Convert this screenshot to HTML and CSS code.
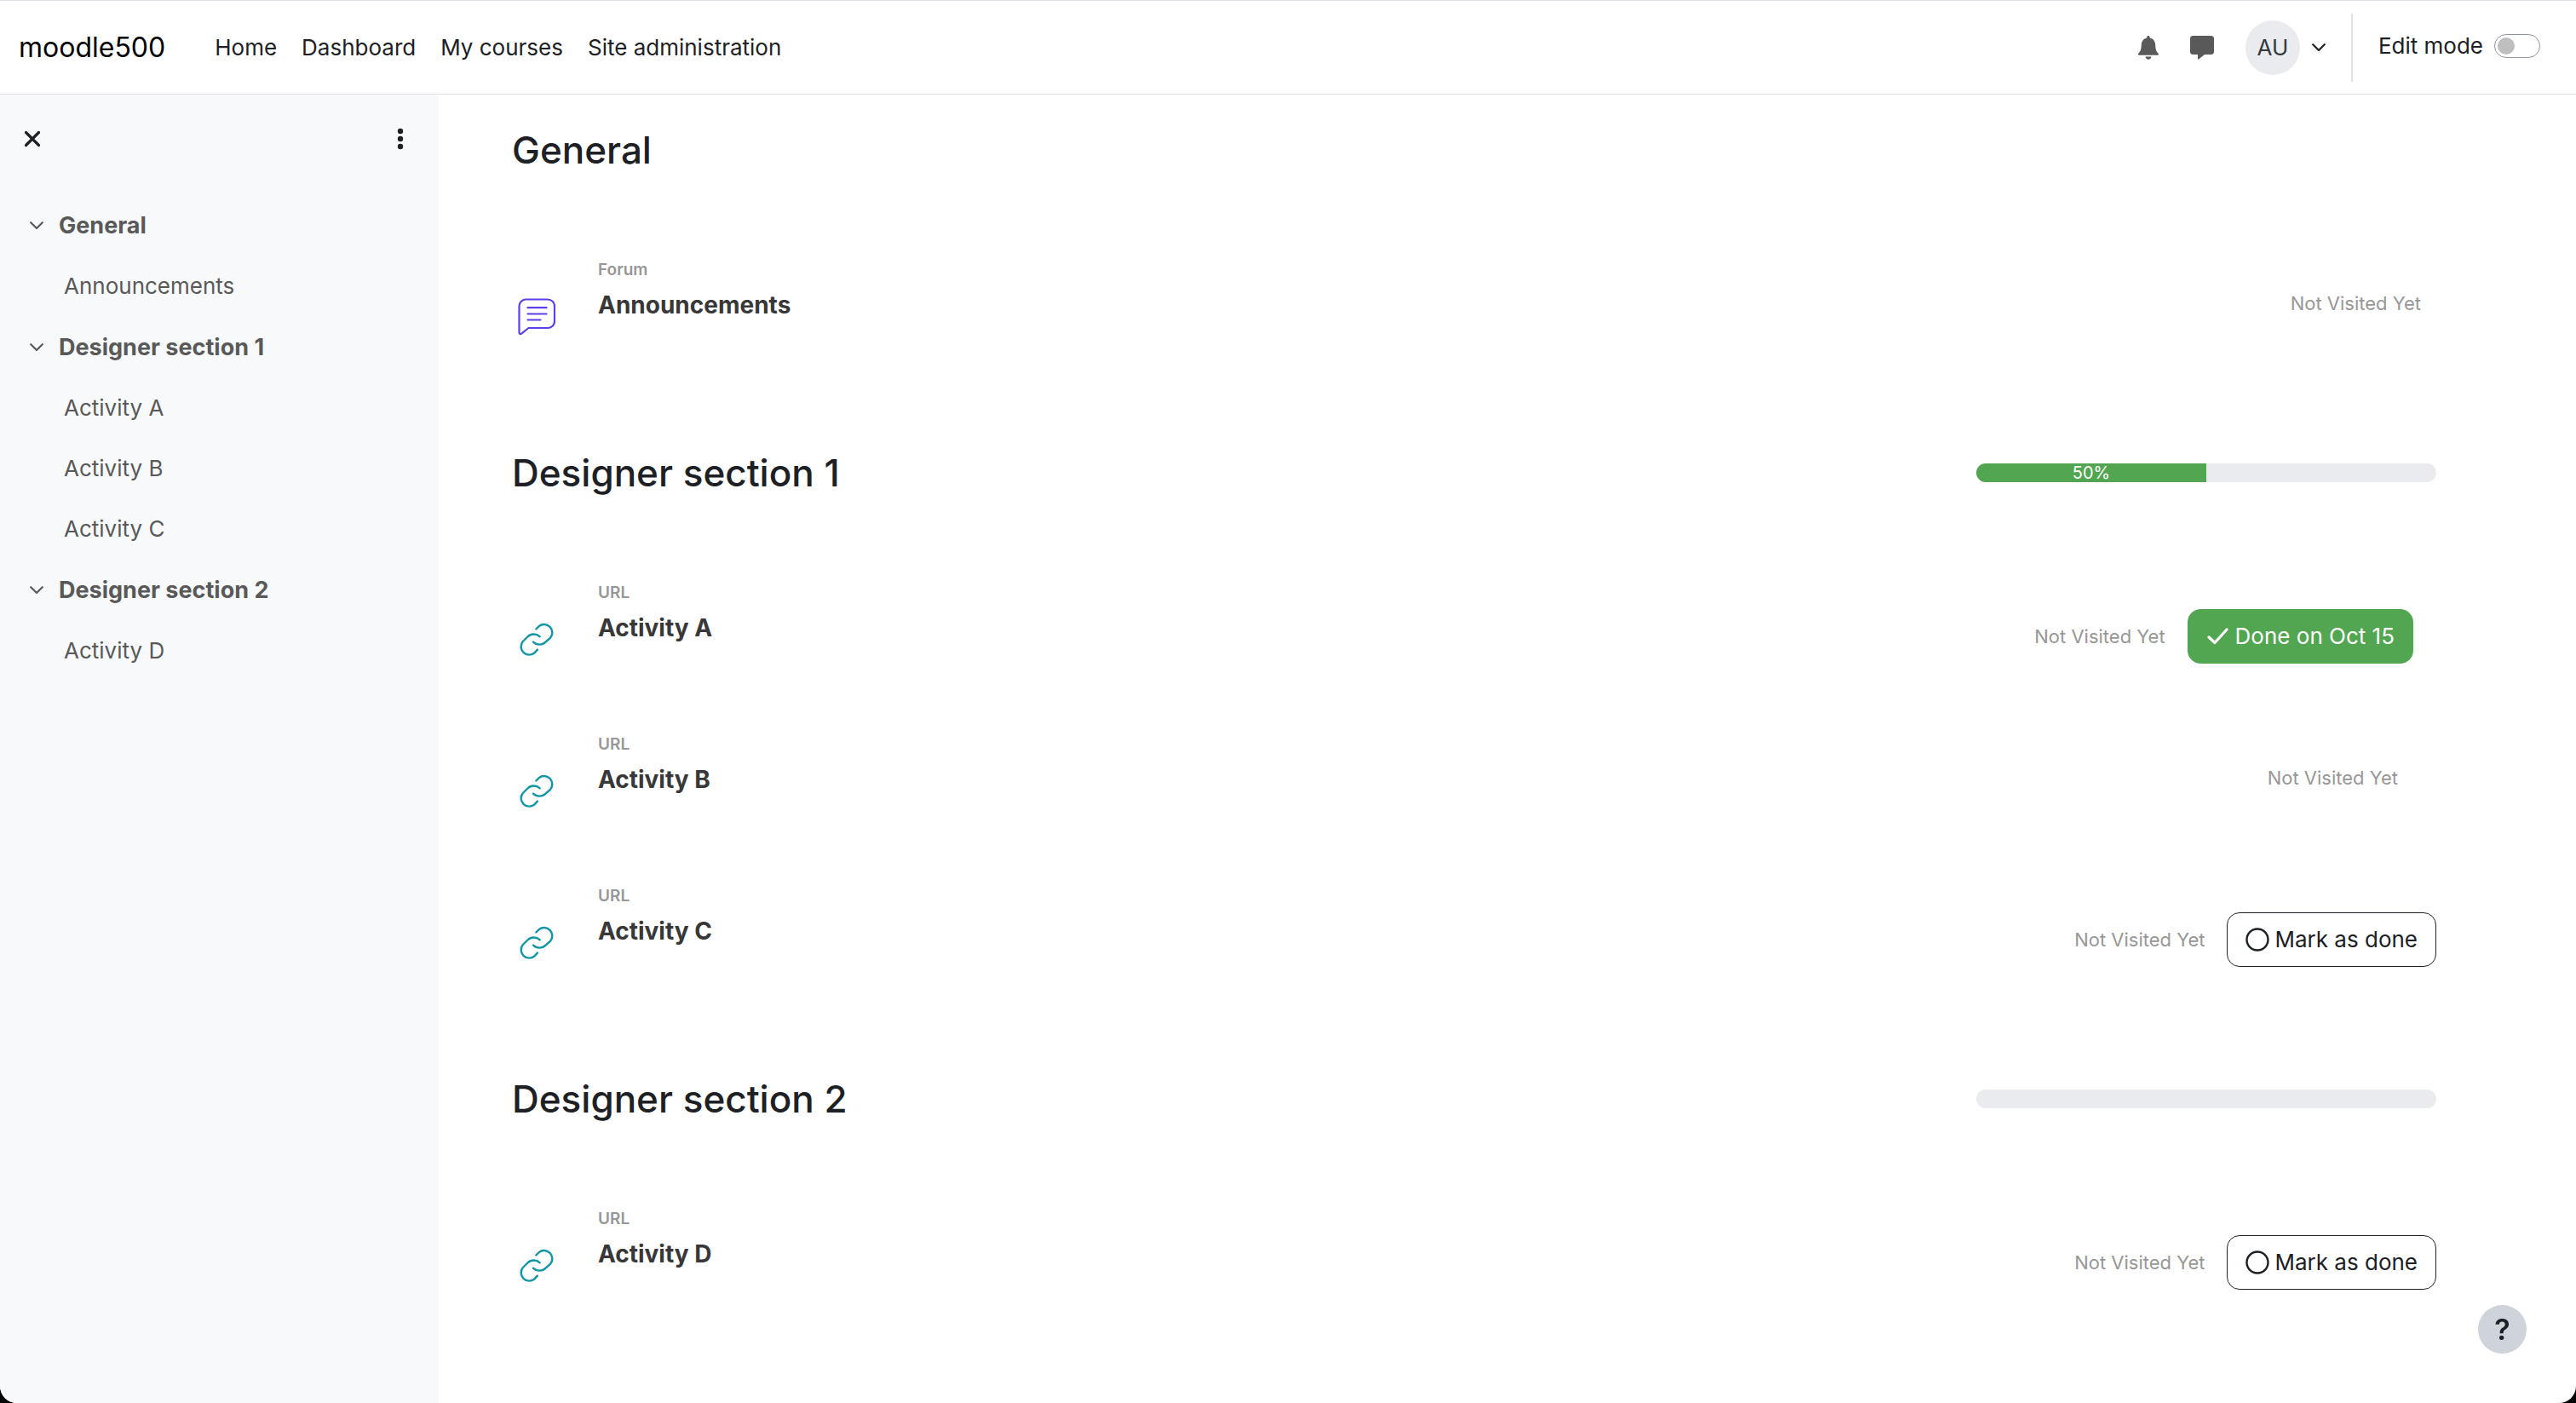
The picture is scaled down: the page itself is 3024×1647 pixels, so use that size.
FILE: index.html
```html
<!DOCTYPE html>
<html lang="en">
<head>
	<meta charset="utf-8">
	<title>moodle500</title>
	<link rel="stylesheet" href="styles.css">
</head>
<body>
<svg class="symbols" aria-hidden="true">
	<symbol id="chevron" viewBox="0 0 16 10">
		<path d="M1.2 1.2 8 8l6.8-6.8" fill="none" stroke="currentColor" stroke-width="2.2" stroke-linecap="round" stroke-linejoin="round"/>
	</symbol>
	<symbol id="link" viewBox="0 0 44 44">
		<g fill="none" stroke="currentColor" stroke-width="2.4" stroke-linecap="round">
			<path d="M21.3 9.5l3.4-3.4a9.6 9.6 0 0 1 13.5 13.5L32.5 24.7a10.4 10.4 0 0 1-14.5 0"/>
			<path d="M25.7 18.3a10.4 10.4 0 0 0-14.3.2L5.8 24a9.6 9.6 0 0 0 13.5 13.5l3.6-3.9"/>
		</g>
	</symbol>
	<symbol id="forum" viewBox="0 0 44 44">
		<g fill="none" stroke="currentColor" stroke-width="2.2" stroke-linecap="round" stroke-linejoin="round">
			<path d="M9 1.5h26a8 8 0 0 1 8 8v17.5a8 8 0 0 1-8 8H12.5l-8.3 6.6c-1.3.9-2.7.4-2.7-1.1V9.500a8 8 0 0 1 7.500-8z"/>
			<path d="M11.500 11.200h22M11.500 18.500h22M11.500 25.500h15"/>
		</g>
	</symbol>
	<symbol id="circle" viewBox="0 0 28 28">
		<circle cx="14" cy="14" r="12.5" fill="none" stroke="currentColor" stroke-width="2.4"/>
	</symbol>
</svg>
<div class="page">
	<header class="navbar">
		<a class="brand" href="#">moodle500</a>
		<nav class="primary-nav">
			<a href="#">Home</a>
			<a href="#">Dashboard</a>
			<a href="#">My courses</a>
			<a href="#">Site administration</a>
		</nav>
		<div class="user-nav">
			<button class="icon-btn" aria-label="Notifications">
				<svg width="24" height="28" viewBox="0 0 24 28"><path d="M12 0c1 0 1.700.7 1.700 1.700v.9c4 .8 6.300 3.900 6.500 8 .2 4.700.6 7.400 3.300 10 .9.900.4 2.200-.8 2.200H1.300c-1.200 0-1.700-1.300-.8-2.200 2.700-2.600 3.100-5.300 3.300-10 .2-4.100 2.500-7.200 6.500-8v-.9C10.300.7 11 0 12 0zM8.600 24.500h6.800c0 1.900-1.500 3.300-3.400 3.300s-3.400-1.400-3.400-3.300z" fill="#595959"/></svg>
			</button>
			<button class="icon-btn" aria-label="Messages">
				<svg width="28" height="28" viewBox="0 0 28 28"><path d="M3.500 0h21A3.500 3.500 0 0 1 28 3.500v15a3.500 3.500 0 0 1-3.500 3.500H17l-7 5.500c-.5.400-1 .1-1-.5v-5H3.500A3.500 3.500 0 0 1 0 18.500v-15A3.500 3.500 0 0 1 3.500 0z" fill="#595959"/></svg>
			</button>
			<button class="user-menu" aria-label="User menu">
				<span class="avatar">AU</span>
				<svg width="16" height="10"><use href="#chevron"/></svg>
			</button>
			<div class="edit-mode">
				<label for="editmode">Edit mode</label>
				<input class="switch" type="checkbox" id="editmode">
			</div>
		</div>
	</header>
	<div class="layout">
		<aside class="drawer">
			<div class="drawer-header">
				<button class="icon-btn" aria-label="Close course index">
					<svg width="20" height="20" viewBox="0 0 20 20"><path d="M2.5 2.5l15 15M17.5 2.5l-15 15" stroke="#1d2125" stroke-width="3.2" stroke-linecap="round"/></svg>
				</button>
				<button class="icon-btn" aria-label="Course index options">
					<svg width="8" height="26" viewBox="0 0 8 26" fill="#1d2125"><circle cx="4" cy="4" r="3.2"/><circle cx="4" cy="13" r="3.2"/><circle cx="4" cy="22" r="3.2"/></svg>
				</button>
			</div>
			<ul class="course-index">
				<li>
					<button class="index-section"><svg width="16" height="10"><use href="#chevron"/></svg>General</button>
					<a class="index-item" href="#">Announcements</a>
				</li>
				<li>
					<button class="index-section"><svg width="16" height="10"><use href="#chevron"/></svg>Designer section 1</button>
					<a class="index-item" href="#">Activity A</a>
					<a class="index-item" href="#">Activity B</a>
					<a class="index-item" href="#">Activity C</a>
				</li>
				<li>
					<button class="index-section"><svg width="16" height="10"><use href="#chevron"/></svg>Designer section 2</button>
					<a class="index-item" href="#">Activity D</a>
				</li>
			</ul>
		</aside>
		<main class="content">
			<section class="section">
				<div class="section-header">
					<h2>General</h2>
				</div>
				<div class="activity">
					<svg class="activity-icon forum" width="44" height="44"><use href="#forum"/></svg>
					<div class="activity-name">
						<span class="type">Forum</span>
						<a href="#">Announcements</a>
					</div>
					<div class="activity-status">
						<span class="visited">Not Visited Yet</span>
					</div>
				</div>
			</section>
			<section class="section">
				<div class="section-header">
					<h2>Designer section 1</h2>
					<div class="progress"><div class="progress-bar" style="width: 50%">50%</div></div>
				</div>
				<div class="activity">
					<svg class="activity-icon" width="44" height="44"><use href="#link"/></svg>
					<div class="activity-name">
						<span class="type">URL</span>
						<a href="#">Activity A</a>
					</div>
					<div class="activity-status indented">
						<span class="visited">Not Visited Yet</span>
						<button class="btn done">
							<svg width="28" height="20" viewBox="0 0 28 20"><path d="M3 11l7 6.500L24 2" fill="none" stroke="currentColor" stroke-width="3.2" stroke-linecap="round" stroke-linejoin="round"/></svg>
							Done on Oct 15
						</button>
					</div>
				</div>
				<div class="activity">
					<svg class="activity-icon" width="44" height="44"><use href="#link"/></svg>
					<div class="activity-name">
						<span class="type">URL</span>
						<a href="#">Activity B</a>
					</div>
					<div class="activity-status indented">
						<span class="visited">Not Visited Yet</span>
					</div>
				</div>
				<div class="activity">
					<svg class="activity-icon" width="44" height="44"><use href="#link"/></svg>
					<div class="activity-name">
						<span class="type">URL</span>
						<a href="#">Activity C</a>
					</div>
					<div class="activity-status">
						<span class="visited">Not Visited Yet</span>
						<button class="btn">
							<svg width="28" height="28"><use href="#circle"/></svg>
							Mark as done
						</button>
					</div>
				</div>
			</section>
			<section class="section">
				<div class="section-header">
					<h2>Designer section 2</h2>
					<div class="progress"></div>
				</div>
				<div class="activity">
					<svg class="activity-icon" width="44" height="44"><use href="#link"/></svg>
					<div class="activity-name">
						<span class="type">URL</span>
						<a href="#">Activity D</a>
					</div>
					<div class="activity-status">
						<span class="visited">Not Visited Yet</span>
						<button class="btn">
							<svg width="28" height="28"><use href="#circle"/></svg>
							Mark as done
						</button>
					</div>
				</div>
			</section>
		</main>
	</div>
	<button class="help" aria-label="Help">?</button>
</div>
</body>
</html>
```

FILE: styles.css
```css
* {
	box-sizing: border-box;
}

html {
	background-color: #000;
}

body {
	margin: 0;
	font-family: Inter, 'Liberation Sans', sans-serif;
	font-size: 26px;
	line-height: 40px;
	color: #1d2125;
}

a {
	color: inherit;
	text-decoration: none;
}

button {
	font: inherit;
	color: inherit;
	background: none;
	border: none;
	padding: 0;
	cursor: pointer;
}

svg {
	display: block;
	flex: none;
}

.symbols {
	position: absolute;
	width: 0;
	height: 0;
}

.page {
	display: flex;
	flex-direction: column;
	min-height: 100vh;
	background-color: #fff;
	border-radius: 0 0 20px 20px;
	overflow: hidden;
}

/* Top bar */
.navbar {
	display: flex;
	align-items: center;
	height: 111px;
	padding: 0 42px 0 22px;
	border-top: 1px solid #dee2e6;
	border-bottom: 1px solid #dee2e6;
}

.brand {
	font-size: 32px;
	color: #000;
}

.primary-nav {
	display: flex;
	gap: 29px;
	margin-left: 58px;
}

.user-nav {
	display: flex;
	align-items: center;
	gap: 37px;
	margin-left: auto;
}

.user-menu {
	display: flex;
	align-items: center;
	gap: 14px;
}

.avatar {
	width: 64px;
	height: 64px;
	line-height: 64px;
	border-radius: 50%;
	background-color: #e9ebee;
	color: #343a40;
	text-align: center;
}

.edit-mode {
	display: flex;
	align-items: center;
	gap: 13px;
	height: 80px;
	margin-left: -7px;
	padding: 0 0 4px 30px;
	border-left: 2px solid #dee2e6;
}

.switch {
	appearance: none;
	display: flex;
	align-items: center;
	width: 54px;
	height: 28px;
	margin: 0;
	padding: 0 3px;
	border: 1px solid #8f959e;
	border-radius: 14px;
}

.switch::before {
	content: '';
	width: 20px;
	height: 20px;
	border-radius: 50%;
	background-color: #bfbfbf;
}

.layout {
	display: flex;
	flex: 1;
}

/* Course index */
.drawer {
	flex: none;
	width: 515px;
	background-color: #f8f9fb;
}

.drawer-header {
	display: flex;
	justify-content: space-between;
	align-items: center;
	height: 104px;
	padding: 0 41px 0 28px;
}

.course-index {
	list-style: none;
	margin: 0;
	padding: 14px 0 0 35px;
	color: #595959;
}

.course-index li {
	margin-bottom: 1px;
}

.index-section,
.index-item {
	display: flex;
	align-items: center;
	height: 71px;
}

.index-section {
	gap: 18px;
	font-size: 27px;
	font-weight: 700;
}

.index-item {
	padding-left: 40px;
}

/* Course sections */
.content {
	flex: 1;
	padding: 37px 164px 0 86px;
}

.section {
	margin-bottom: 85px;
}

.section-header {
	display: flex;
	justify-content: space-between;
	align-items: center;
	margin-bottom: 60px;
}

h2 {
	margin: 0;
	font-size: 44px;
	font-weight: 500;
	line-height: 56px;
}

.progress {
	width: 540px;
	height: 22px;
	border-radius: 11px;
	background-color: #e9ebee;
	overflow: hidden;
}

.progress-bar {
	background-color: #52a551;
	color: #fff;
	font-size: 20px;
	line-height: 22px;
	text-align: center;
}

.activity {
	display: flex;
	height: 178px;
}

.activity-icon {
	margin: 86px 50px 0 7px;
	color: #1296a6;
}

.activity-icon.forum {
	color: #5b40ea;
}

.activity-name {
	display: flex;
	flex-direction: column;
	gap: 9px;
	padding-top: 41px;
	font-size: 28px;
	font-weight: 700;
	color: #383838;
}

.type {
	font-size: 19px;
	line-height: 24px;
	font-weight: 600;
	color: #979797;
}

.activity-status {
	display: flex;
	align-items: center;
	align-self: flex-start;
	gap: 8px;
	margin-left: auto;
	padding-top: 72px;
}

.activity-status.indented {
	padding-right: 27px;
}

.visited {
	padding-right: 18px;
	font-size: 22px;
	color: #979797;
}

.btn {
	display: flex;
	align-items: center;
	gap: 6px;
	height: 64px;
	padding: 0 21px;
	border: 1px solid #1d2125;
	border-radius: 15px;
}

.btn.done {
	background-color: #52a551;
	border-color: #52a551;
	color: #fff;
}

.help {
	position: fixed;
	right: 58px;
	bottom: 58px;
	width: 57px;
	height: 57px;
	border-radius: 50%;
	background-color: #ced4da;
	font-size: 34px;
	font-weight: 600;
}
```
